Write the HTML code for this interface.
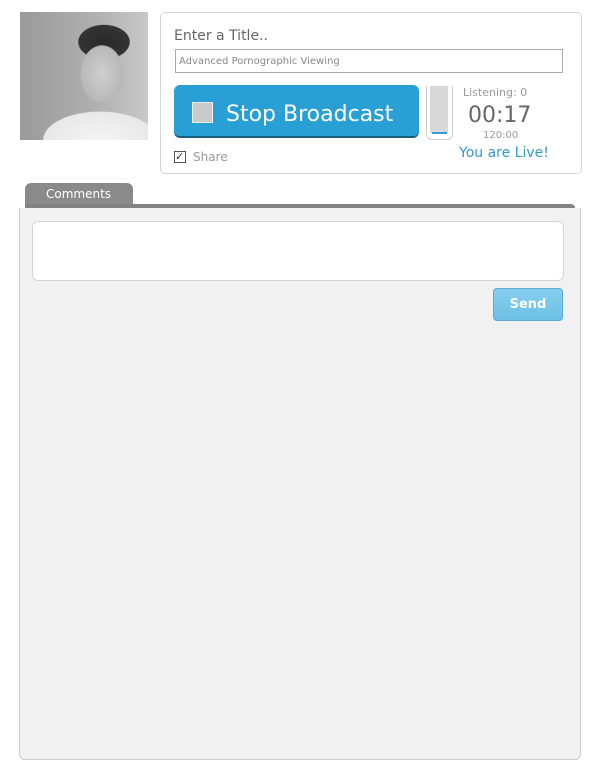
<!DOCTYPE html>
<html><head><style>
*{margin:0;padding:0;box-sizing:border-box}
body{width:591px;height:773px;background:#fff;font-family:"DejaVu Sans","Liberation Sans",sans-serif;position:relative;overflow:hidden}
.abs{position:absolute}
</style></head><body>
<div class="abs" style="left:20px;top:12px;width:128px;height:128px;background:radial-gradient(ellipse 30px 40px at 82px 62px,#cfcfcf 0,#b8b8b8 70%,transparent 73%),radial-gradient(ellipse 36px 24px at 84px 30px,#2a2a2a 0,#333 70%,transparent 73%),linear-gradient(90deg,#9a9a9a,#b0b0b0 60%,#c8c8c8);"></div>
<div class="abs" style="left:20px;top:100px;width:128px;height:40px;background:radial-gradient(ellipse 80px 40px at 80px 40px,#f4f4f4 0,#e8e8e8 70%,transparent 72%)"></div>
<div class="abs" style="left:160px;top:12px;width:422px;height:162px;border:1px solid #d4d4d4;border-radius:5px;background:#fff"></div>
<div class="abs" style="left:174px;top:28px;font-size:14px;color:#666">Enter a Title..</div>
<div class="abs" style="left:175px;top:49px;width:388px;height:24px;border:1px solid #aaa;font-size:10px;color:#888;padding:6px 3px">Advanced Pornographic Viewing</div>
<div class="abs" style="left:174px;top:85px;width:245px;height:53px;background:#28a0d6;border-radius:6px;border-bottom:2px solid #1b5e7e"></div>
<div class="abs" style="left:192px;top:102px;width:21px;height:21px;background:#c9c9c9;border:1px solid #eee"></div>
<div class="abs" style="left:226px;top:102px;font-size:22px;color:#fff">Stop Broadcast</div>
<div class="abs" style="left:426px;top:86px;width:27px;height:54px;border:1px solid #ccc;border-top:none;border-radius:0 0 6px 6px"></div>
<div class="abs" style="left:430px;top:86px;width:18px;height:47px;background:#d8d8d8"></div>
<div class="abs" style="left:432px;top:132px;width:15px;height:2px;background:#28a0d6"></div>
<div class="abs" style="left:463px;top:86px;font-size:11px;color:#999">Listening: 0</div>
<div class="abs" style="left:468px;top:103px;font-size:22px;color:#666">00:17</div>
<div class="abs" style="left:483px;top:130px;font-size:10px;color:#999">120:00</div>
<div class="abs" style="left:459px;top:145px;font-size:14px;color:#3399cc">You are Live!</div>
<div class="abs" style="left:174px;top:151px;width:12px;height:12px;border:1px solid #555;font-size:11px;line-height:10px;color:#333">✓</div>
<div class="abs" style="left:193px;top:150px;font-size:12px;color:#999">Share</div>
<div class="abs" style="left:25px;top:183px;width:108px;height:24px;background:#8a8a8a;border-radius:6px 6px 0 0"></div>
<div class="abs" style="left:46px;top:187px;font-size:12px;color:#fff">Comments</div>
<div class="abs" style="left:25px;top:204px;width:550px;height:5px;background:#828282;border-radius:0 4px 0 0"></div>
<div class="abs" style="left:19px;top:208px;width:562px;height:552px;background:#f1f1f1;border:1px solid #ccc;border-top:none;border-radius:0 0 6px 6px"></div>
<div class="abs" style="left:32px;top:221px;width:532px;height:60px;background:#fff;border:1px solid #d4d4d4;border-radius:6px"></div>
<div class="abs" style="left:493px;top:288px;width:70px;height:33px;background:linear-gradient(#86cfee,#6cc0e6);border:1px solid #5aaed6;border-radius:4px;font-size:13px;font-weight:bold;color:#fff;text-align:center;line-height:31px">Send</div>
</body></html>
